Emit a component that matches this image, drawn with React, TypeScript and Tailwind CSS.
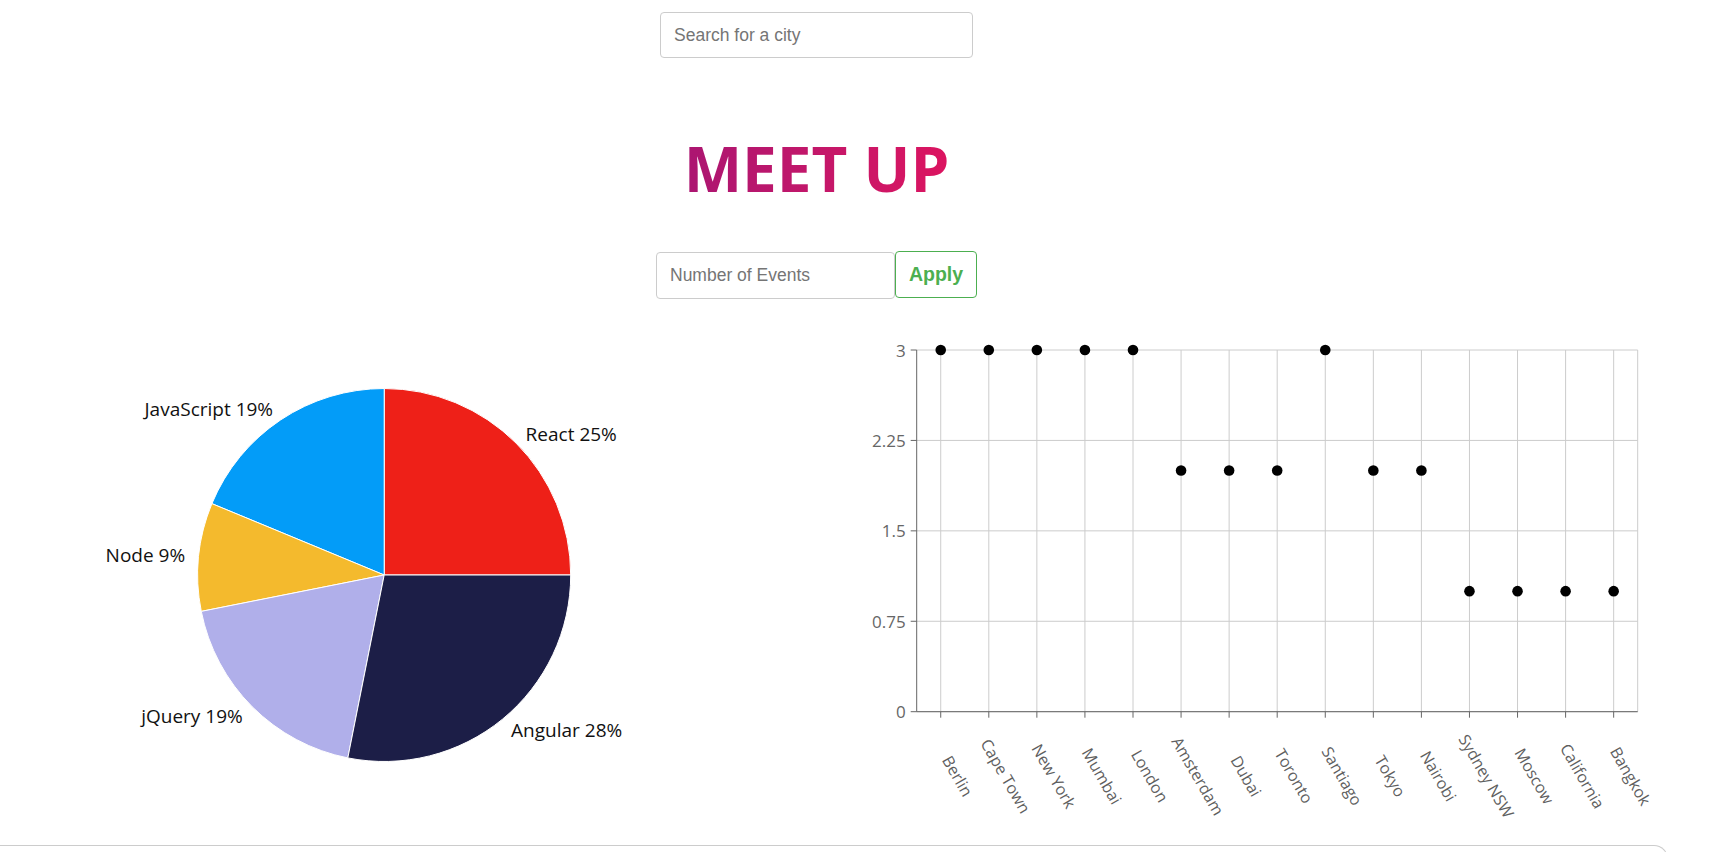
import React from "react";

const genres = [
  { name: "React", value: 8, color: "#ee2018" },
  { name: "JavaScript", value: 6, color: "#039cf8" },
  { name: "Node", value: 3, color: "#f4ba2d" },
  { name: "jQuery", value: 6, color: "#b0afea" },
  { name: "Angular", value: 9, color: "#1c1e47" },
];

const cities = [
  { city: "Berlin", count: 3 },
  { city: "Cape Town", count: 3 },
  { city: "New York", count: 3 },
  { city: "Mumbai", count: 3 },
  { city: "London", count: 3 },
  { city: "Amsterdam", count: 2 },
  { city: "Dubai", count: 2 },
  { city: "Toronto", count: 2 },
  { city: "Santiago", count: 3 },
  { city: "Tokyo", count: 2 },
  { city: "Nairobi", count: 2 },
  { city: "Sydney NSW", count: 1 },
  { city: "Moscow", count: 1 },
  { city: "California", count: 1 },
  { city: "Bangkok", count: 1 },
];

// ================================
// Pie chart (event genres)
// ================================
function GenrePie() {
  const cx = 384.2;
  const cy = 265;
  const r = 186.5;
  const labelR = 200;
  const total = genres.reduce((s, g) => s + g.value, 0);

  const pt = (deg: number, rad: number) => {
    const a = (deg * Math.PI) / 180;
    return [cx + rad * Math.cos(a), cy - rad * Math.sin(a)];
  };

  let start = 0;
  const slices = genres.map((g) => {
    const sweep = (g.value / total) * 360;
    const end = start + sweep;
    const [x0, y0] = pt(start, r);
    const [x1, y1] = pt(end, r);
    const mid = start + sweep / 2;
    const [lx, ly] = pt(mid, labelR);
    const d = `M${cx},${cy} L${x0},${y0} A${r},${r} 0 ${sweep > 180 ? 1 : 0} 0 ${x1},${y1} Z`;
    const anchor = Math.cos((mid * Math.PI) / 180) >= 0 ? "start" : "end";
    const pct = Math.round((g.value / total) * 100);
    start = end;
    return { ...g, d, lx, ly, anchor, pct };
  });

  return (
    <svg width={816} height={530} className="shrink-0">
      {slices.map((s) => (
        <path key={s.name} d={s.d} fill={s.color} stroke="#fff" strokeWidth={1} />
      ))}
      {slices.map((s) => (
        <text
          key={s.name + "-label"}
          x={s.lx}
          y={s.ly}
          textAnchor={s.anchor}
          dominantBaseline="central"
          fill="#111"
          fontSize={19}
          fontFamily="'Open Sans', sans-serif"
        >
          {s.name} {s.pct}%
        </text>
      ))}
    </svg>
  );
}

// ================================
// Scatter chart (events per city)
// ================================
function CityScatter() {
  const left = 100.7;
  const right = 821.7;
  const top = 40;
  const bottom = 401.7;
  const band = (right - left) / cities.length;
  const yOf = (v: number) => bottom - (v / 3) * (bottom - top);
  const yTicks = [0, 0.75, 1.5, 2.25, 3];
  const font = "'Open Sans', sans-serif";

  return (
    <svg width={852} height={530} className="shrink-0">
      {/* grid */}
      {yTicks.map((t) => (
        <line key={"h" + t} x1={left} x2={right} y1={yOf(t)} y2={yOf(t)} stroke="#ccc" />
      ))}
      {cities.map((c, i) => {
        const x = left + band * (i + 0.5);
        return <line key={"v" + c.city} x1={x} x2={x} y1={top} y2={bottom} stroke="#ccc" />;
      })}
      <line x1={right} x2={right} y1={top} y2={bottom} stroke="#ccc" />

      {/* y axis */}
      <line x1={left} x2={left} y1={top} y2={bottom} stroke="#666" />
      {yTicks.map((t) => (
        <g key={"yt" + t}>
          <line x1={left - 6} x2={left} y1={yOf(t)} y2={yOf(t)} stroke="#666" />
          <text
            x={left - 11}
            y={yOf(t)}
            textAnchor="end"
            dominantBaseline="central"
            fill="#666"
            fontSize={17}
            fontFamily={font}
          >
            {t}
          </text>
        </g>
      ))}

      {/* x axis */}
      <line x1={left} x2={right} y1={bottom} y2={bottom} stroke="#666" />
      {cities.map((c, i) => {
        const x = left + band * (i + 0.5);
        const lx = x + 17;
        const ly = 466;
        return (
          <g key={"xt" + c.city}>
            <line x1={x} x2={x} y1={bottom} y2={bottom + 6} stroke="#666" />
            <text
              x={lx}
              y={ly}
              textAnchor="middle"
              dominantBaseline="central"
              fill="#5f5f5f"
              fontSize={16}
              fontFamily={font}
              transform={`rotate(60 ${lx} ${ly})`}
            >
              {c.city}
            </text>
          </g>
        );
      })}

      {/* points */}
      {cities.map((c, i) => (
        <circle key={"p" + c.city} cx={left + band * (i + 0.5)} cy={yOf(c.count)} r={5.3} fill="#000" />
      ))}
    </svg>
  );
}

export default function App() {
  return (
    <div className="min-h-[852px] bg-white overflow-hidden font-['Liberation_Sans',Arial,sans-serif]">
      <div className="w-[1633px] flex flex-col items-center">
        {/* City search */}
        <input
          type="text"
          placeholder="Search for a city"
          className="mt-[12px] w-[313px] h-[46px] px-[13px] border border-[#cccccc] rounded-[4px] text-[17.5px] text-[#333] placeholder:text-[#757575] outline-none"
        />

        <h1 className="mt-[79px] h-[62px] text-[62px] leading-[62px] font-bold font-['Open_Sans',sans-serif] bg-gradient-to-r from-[#ab1571] to-[#dc1460] bg-clip-text text-transparent">
          MEET UP
        </h1>

        {/* Number of events */}
        <div className="mt-[52px] flex items-start">
          <input
            type="text"
            placeholder="Number of Events"
            className="mt-[1px] w-[239px] h-[47px] px-[13px] border border-[#cccccc] rounded-[4px] text-[17.5px] text-[#333] placeholder:text-[#757575] outline-none"
          />
          <button className="w-[82px] h-[47px] border border-[#4caf50] rounded-[4px] bg-white text-[#4caf50] font-bold text-[19.5px]">
            Apply
          </button>
        </div>
      </div>

      {/* Charts */}
      <div className="mt-[11px] flex">
        <GenrePie />
        <CityScatter />
      </div>

      {/* Footer box */}
      <div className="mt-[5px] w-[1668px] h-[20px] border-t border-r border-[#cccccc] rounded-tr-[14px]" />
    </div>
  );
}
